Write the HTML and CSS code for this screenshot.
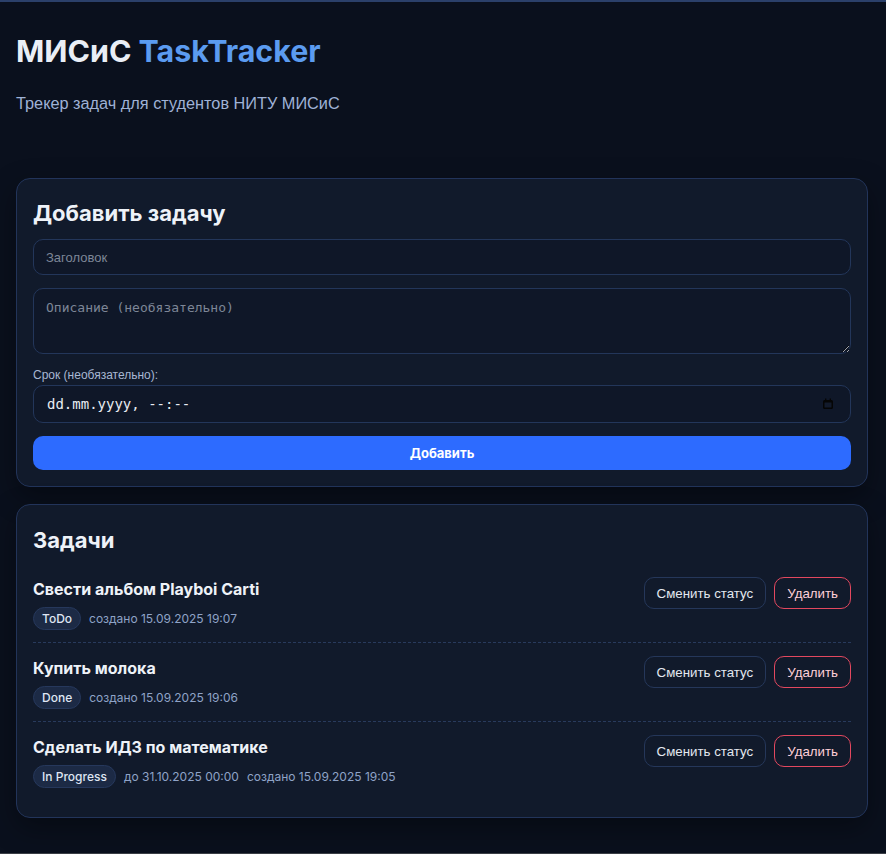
FILE: index.html
```html
<!DOCTYPE html>
<html lang="ru">
<head>
<meta charset="utf-8">
<title>МИСиС TaskTracker</title>
<link rel="stylesheet" href="styles.css">
</head>
<body>
<div class="page">
  <header class="header">
    <h1 class="brand">МИСиС <span class="brand-accent">TaskTracker</span></h1>
    <p class="subtitle">Трекер задач для студентов НИТУ МИСиС</p>
  </header>

  <section class="card card-form">
    <h2 class="card-title">Добавить задачу</h2>
    <form class="form">
      <input class="field field-input" type="text" placeholder="Заголовок">
      <textarea class="field field-textarea" placeholder="Описание (необязательно)"></textarea>
      <label class="field-label">Срок (необязательно):</label>
      <div class="field field-date">
        <span class="date-text">dd.mm.yyyy, --:--</span>
        <svg class="date-icon" width="12" height="12" viewBox="0 0 12 12" aria-hidden="true">
          <rect x="1" y="2" width="10" height="9" rx="1.5" fill="#050505"/>
          <rect x="2.5" y="4.5" width="7" height="5" fill="#121a2b"/>
          <rect x="3" y="0.5" width="1.4" height="2.5" fill="#050505"/>
          <rect x="7.6" y="0.5" width="1.4" height="2.5" fill="#050505"/>
        </svg>
      </div>
      <button class="btn-primary" type="button">Добавить</button>
    </form>
  </section>

  <section class="card card-list">
    <h2 class="card-title card-title-list">Задачи</h2>
    <ul class="tasks">
      <li class="task">
        <div class="task-main">
          <div class="task-title">Свести альбом Playboi Carti</div>
          <div class="task-meta">
            <span class="badge">ToDo</span>
            <span class="meta-text">создано 15.09.2025 19:07</span>
          </div>
        </div>
        <div class="task-actions">
          <button class="btn btn-ghost" type="button">Сменить статус</button>
          <button class="btn btn-danger" type="button">Удалить</button>
        </div>
      </li>
      <li class="task">
        <div class="task-main">
          <div class="task-title">Купить молока</div>
          <div class="task-meta">
            <span class="badge">Done</span>
            <span class="meta-text">создано 15.09.2025 19:06</span>
          </div>
        </div>
        <div class="task-actions">
          <button class="btn btn-ghost" type="button">Сменить статус</button>
          <button class="btn btn-danger" type="button">Удалить</button>
        </div>
      </li>
      <li class="task">
        <div class="task-main">
          <div class="task-title">Сделать ИДЗ по математике</div>
          <div class="task-meta">
            <span class="badge">In Progress</span>
            <span class="meta-text">до 31.10.2025 00:00</span>
            <span class="meta-text">создано 15.09.2025 19:05</span>
          </div>
        </div>
        <div class="task-actions">
          <button class="btn btn-ghost" type="button">Сменить статус</button>
          <button class="btn btn-danger" type="button">Удалить</button>
        </div>
      </li>
    </ul>
  </section>
</div>
</body>
</html>
```

FILE: styles.css
```css
html, body {
  margin: 0;
  padding: 0;
  background: #0a101d;
}

body {
  font-family: Inter, "Noto Sans", sans-serif;
  color: #e6ebf3;
}

.page {
  box-sizing: border-box;
  min-height: 100vh;
  padding: 0 18px 0 16px;
  border-top: 2px solid #2b406a;
  border-bottom: 1px solid #3b3f46;
}

.header {
  padding-top: 31px;
  margin-bottom: 65px;
}

.brand {
  margin: 0;
  font-size: 30.4px;
  line-height: 36px;
  font-weight: 700;
  color: #e9eef6;
}

.brand-accent {
  color: #5b9bf0;
}

.subtitle {
  margin: 24px 0 0;
  font-family: "Liberation Sans", Arial, sans-serif;
  font-size: 16.3px;
  line-height: 20px;
  color: #9fb2d6;
}

.card {
  background: #111a2b;
  border: 1px solid #22345a;
  border-radius: 14px;
  padding: 16px;
  box-shadow: 0 10px 28px rgba(0, 0, 0, 0.35);
}

.card-list {
  margin-top: 17px;
  padding-bottom: 17px;
}

.card-title {
  margin: 5px 0 13px;
  font-size: 22px;
  line-height: 26px;
  font-weight: 700;
  color: #eef2f8;
}

.card-title-list {
  margin: 6px 0 11px;
}

.form {
  display: flex;
  flex-direction: column;
}

.field {
  box-sizing: border-box;
  width: 100%;
  background: #0f1728;
  border: 1px solid #23365a;
  border-radius: 10px;
  color: #e5e9f0;
  outline: none;
}

.field-input {
  height: 36px;
  padding: 0 12px;
  margin-bottom: 13px;
  font-family: "Liberation Sans", Arial, sans-serif;
  font-size: 13px;
}

.field-input::placeholder {
  color: #7d8697;
}

.field-textarea {
  height: 66px;
  padding: 11px 12px 9px;
  margin-bottom: 14px;
  font-family: "DejaVu Sans Mono", "Liberation Mono", monospace;
  font-size: 13px;
  resize: vertical;
}

.field-textarea::placeholder {
  color: #7d8697;
}

.field-label {
  font-family: "Liberation Sans", Arial, sans-serif;
  font-size: 12px;
  line-height: 14px;
  color: #a8b7d2;
  margin-bottom: 3px;
}

.field-date {
  height: 38px;
  padding: 0 16px 0 13px;
  margin-bottom: 13px;
  display: flex;
  align-items: center;
  justify-content: space-between;
}

.date-text {
  font-family: "DejaVu Sans Mono", "Liberation Mono", monospace;
  font-size: 14px;
  color: #e8ecf2;
}

.date-icon {
  display: block;
}

.btn-primary {
  height: 34px;
  border: none;
  border-radius: 10px;
  background: #2d6bff;
  color: #ffffff;
  font-family: Inter, "Noto Sans", sans-serif;
  font-size: 13px;
  font-weight: 700;
}

.tasks {
  list-style: none;
  margin: 0;
  padding: 0;
}

.task {
  display: flex;
  justify-content: space-between;
  align-items: flex-start;
  padding: 13px 0 12px;
  border-bottom: 1px dashed #283a5c;
}

.task:last-child {
  border-bottom: none;
}

.task-title {
  font-size: 16px;
  line-height: 24px;
  font-weight: 700;
  color: #eef2f8;
}

.task-meta {
  display: flex;
  align-items: center;
  gap: 8px;
  margin-top: 6px;
}

.badge {
  box-sizing: border-box;
  height: 23px;
  line-height: 21px;
  padding: 0 8px;
  border-radius: 12px;
  background: #1c2a45;
  border: 1px solid #26385c;
  font-size: 12px;
  font-weight: 500;
  color: #dfe6f3;
}

.meta-text {
  font-size: 12px;
  color: #8fa3c7;
}

.task-actions {
  display: flex;
  gap: 8px;
}

.btn {
  box-sizing: border-box;
  height: 32px;
  padding: 0 12px;
  border-radius: 10px;
  background: transparent;
  font-family: "Liberation Sans", Arial, sans-serif;
  font-size: 13.3px;
}

.btn-ghost {
  border: 1px solid #25375a;
  color: #e3e8f0;
}

.btn-danger {
  border: 1px solid #e3485f;
  color: #ffd0d8;
}
```
